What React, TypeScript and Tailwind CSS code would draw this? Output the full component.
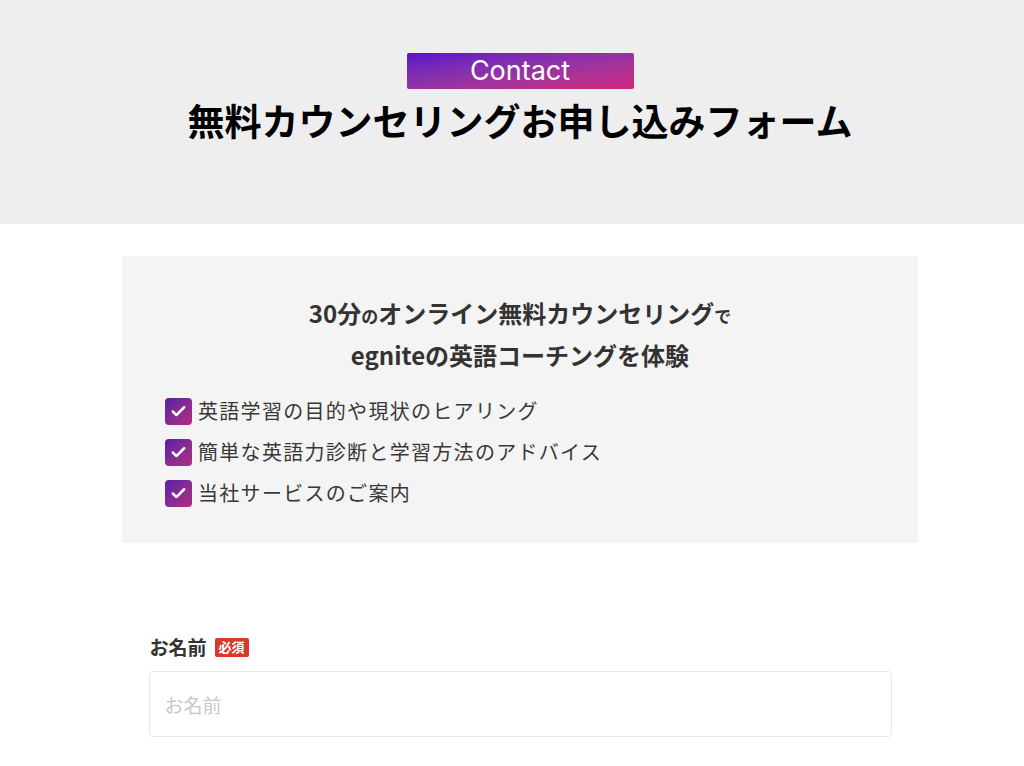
import { Check } from 'lucide-react';

const jp = { fontFamily: '"Noto Sans CJK JP", "Noto Sans", sans-serif' };

const points = [
  '英語学習の目的や現状のヒアリング',
  '簡単な英語力診断と学習方法のアドバイス',
  '当社サービスのご案内',
];

export default function App() {
  return (
    <div className="min-h-[766px] bg-white pl-4" style={jp}>
      {/* Header */}
      <header className="-ml-4 flex h-[224px] flex-col items-center bg-[#eeeeee] pl-4 pt-[53px]">
        <span
          className="flex h-[36px] w-[227px] items-center justify-center rounded-[2px] bg-gradient-to-br from-[#5a0cc9] to-[#d4237a] text-[27px] text-white"
          style={{ fontFamily: 'Inter, "Liberation Sans", sans-serif' }}
        >
          Contact
        </span>
        <h1 className="mt-[4px] text-[37px] font-bold leading-[54px] text-black">
          無料カウンセリングお申し込みフォーム
        </h1>
      </header>

      {/* Intro */}
      <section className="mx-auto mt-8 w-[796px] bg-[#f4f4f4] px-[42px] pb-[35px] pt-[36px]">
        <div className="text-center text-[24px] font-bold leading-[42px] text-[#333333]">
          <p>
            30分<span className="text-[17px] leading-none">の</span>オンライン無料カウンセリング
            <span className="text-[17px] leading-none">で</span>
          </p>
          <p>egniteの英語コーチングを体験</p>
        </div>
        <ul className="mt-[20px] flex flex-col gap-[11px]">
          {points.map((p) => (
            <li key={p} className="flex items-center gap-[6px] pl-px">
              <span className="flex h-[27px] w-[27px] items-center justify-center rounded-[4px] bg-gradient-to-br from-[#5a1aa6] to-[#b4287c]">
                <Check size={17} strokeWidth={3.5} className="text-white" />
              </span>
              <span className="text-[20px] leading-[30px] tracking-[1.3px] text-[#383838]">{p}</span>
            </li>
          ))}
        </ul>
      </section>

      {/* Form */}
      <form className="mx-auto mt-[91px] w-[743px]">
        <label className="flex items-center gap-[8px] pl-px">
          <span className="text-[19px] font-bold leading-[26px] text-[#333333]">お名前</span>
          <span className="flex h-[19px] items-center rounded-[2px] bg-[#d9392b] px-[4px] text-[13px] font-bold text-white">
            必須
          </span>
        </label>
        <input
          placeholder="お名前"
          className="mt-[11px] h-[66px] w-full rounded-[4px] border border-[#e6e6e6] bg-white px-[15px] text-[19px] text-[#333333] outline-none placeholder:text-[#c8c8c8]"
        />
      </form>
    </div>
  );
}
